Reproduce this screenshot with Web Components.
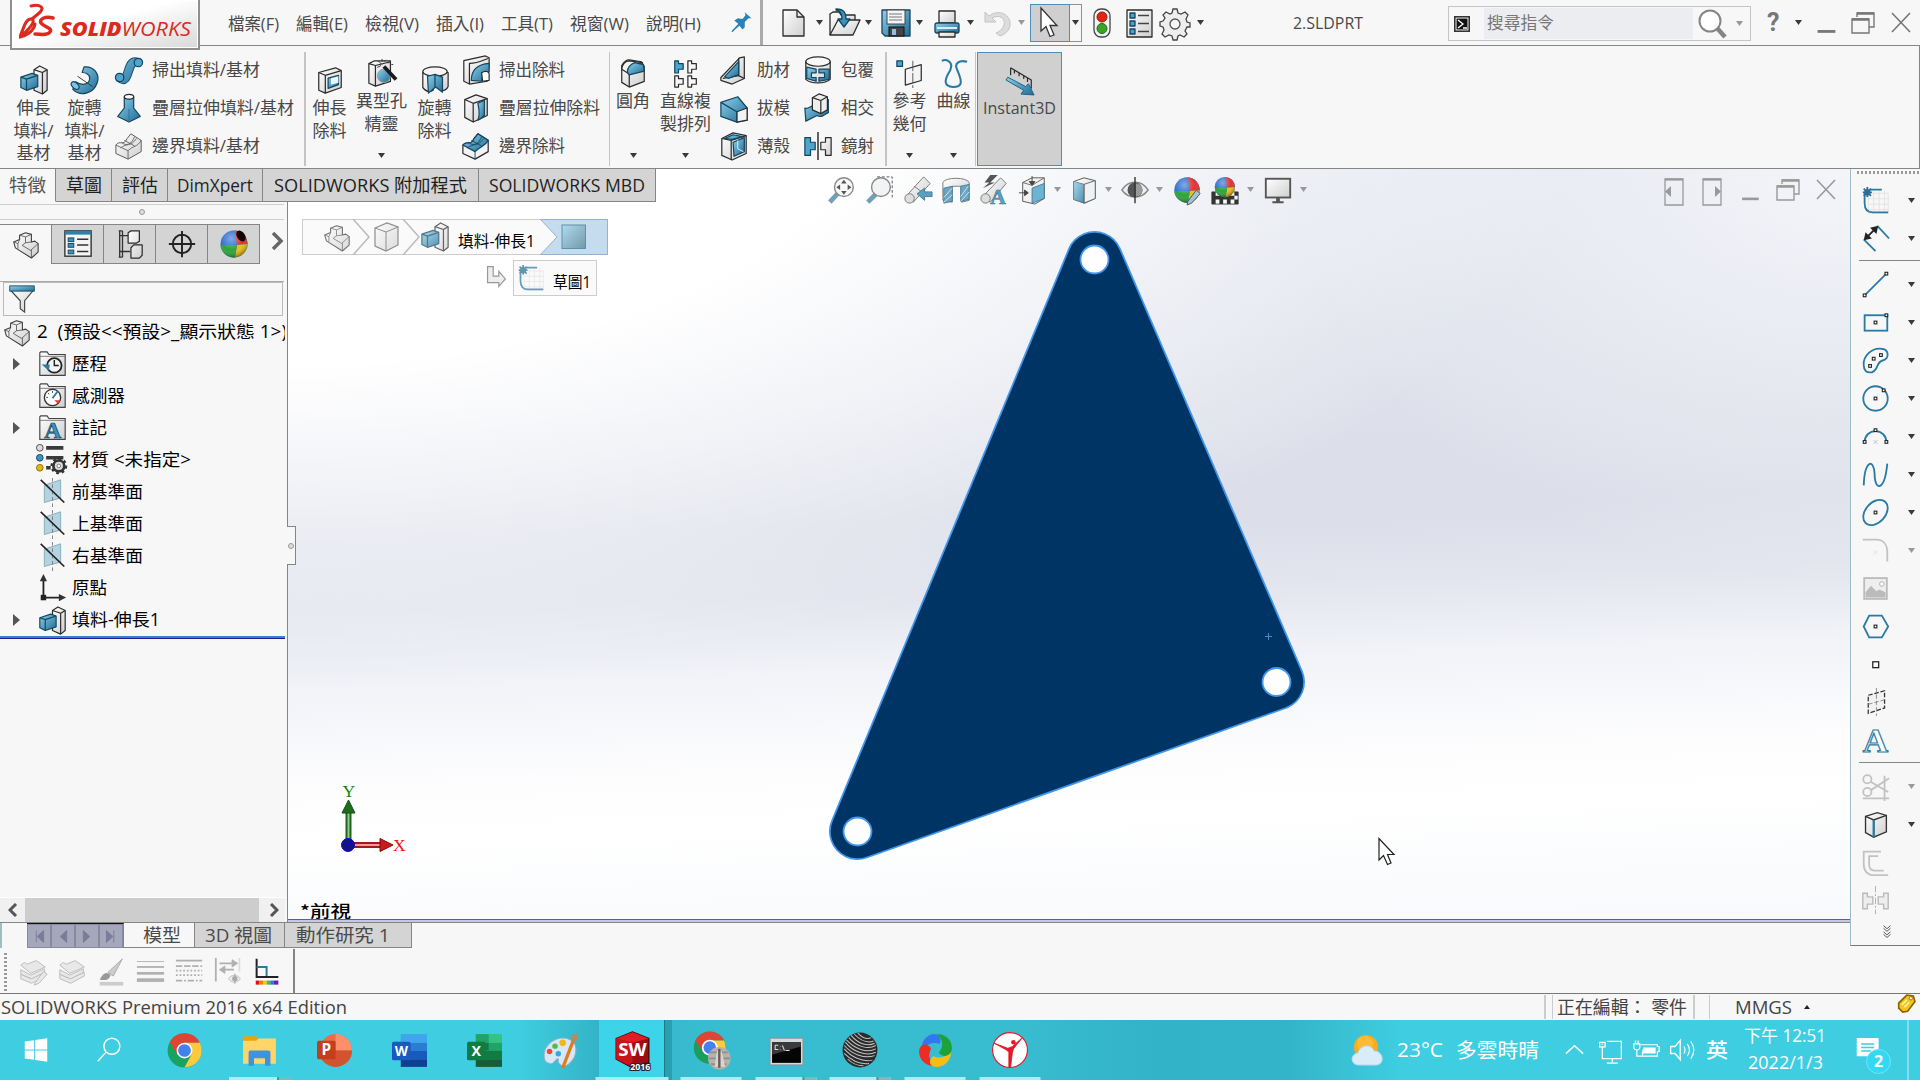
<!DOCTYPE html>
<html lang="zh-Hant">
<head>
<meta charset="utf-8">
<title>SOLIDWORKS</title>
<style>
html,body{margin:0;width:1920px;height:1080px;overflow:hidden;background:#f7f7f7}
body{font-family:"Open Sans","Noto Sans CJK TC",sans-serif;color:#444}
</style>
</head>
<body>
<sw-app></sw-app>
<script>
const K = 'stroke="#2b2b2b" stroke-width="1.3" stroke-linejoin="round"';
const B = 'stroke="#14465f" stroke-width="1.3" stroke-linejoin="round"';
const L = 'fill="none" stroke="#2a7aa4" stroke-width="2"';
const Y = 'fill="none" stroke="#c2c2c2" stroke-width="2"';
const pt = (x, y, c = '#222') => `<rect x="${x - 1.5}" y="${y - 1.5}" width="3" height="3" fill="#fff" stroke="${c}" stroke-width="1.2"/>`;
const folder = '<path d="M2 6v-3l1-1h7l2 3h18v23h-28z" fill="url(#g)" stroke="#444" stroke-width="1.3"/><path d="M2 7h28" stroke="#777"/>';
const plane = '<path d="M7 8 25 2v20L7 27z" fill="#b3d3e2" stroke="#86a9ba"/><path d="M16 0v32" stroke="#777" stroke-dasharray="4 3"/><path d="M3 2 29 27" stroke="#222" stroke-width="1.8"/>';
const asm = '<path d="M2 13l7-3V5l7-3 7 2v9l4-1 4 3v10l-8 7L4 20z" fill="url(#g)" stroke="#3f3f3f" stroke-width="1.3" stroke-linejoin="round"/><path d="M2 13l5 2 2-5M9 5l7 2 7-3M16 7v7l7-1M7 15v6M16 14l-4 3 10 6 9-8M23 22v9" fill="none" stroke="#555"/>';
const ball = '<circle cx="16" cy="16" r="13.500" fill="#2f6fd0"/><path d="M19 17 17 2.500A13.500 13.500 0 0 1 29.500 16z" fill="#d33"/><path d="M19 17 29.500 16A13.500 13.500 0 0 1 17 29.500z" fill="#e8bd1a"/><path d="M19 17 17 29.500A13.500 13.500 0 0 1 2.500 17z" fill="#2da33a"/><circle cx="16" cy="16" r="13.500" fill="url(#s)"/>';
const doc = 'fill="url(#g)" stroke="#2b2b2b" stroke-width="1.3" stroke-linejoin="round"';
const ICONS = {
 pin:'<path d="M4 29l9-10-6-5 5-3 6 1 4-5-1-4 9 8-4 0-5 5v7l-3 3-4-5z" fill="#2a83b8"/><path d="M4 29l11-12" stroke="#2a83b8" stroke-width="2"/>',
 new:`<path d="M6 3H20L27 10V29H6z" ${doc}/><path d="M20 3V10H27" fill="none" ${K}/>`,
 open:`<path d="M1 28V7l3-2h6l2 3h14v5" fill="url(#g)" ${K}/><path d="M1 28 9 13H31L24 28z" fill="url(#g)" ${K}/><path d="M7 2c9 0 10 5 10 10h4l-6 8-6-8h4c0-4-1-8-6-9z" fill="#3d93bd" ${B}/>`,
 save:`<path d="M2 3H30V29H5L2 26z" fill="url(#b)" ${B}/><rect x="7" y="3" width="18" height="14" fill="#f5f5f5" stroke="#444"/><path d="M9 7H22M9 10H22M9 13H22" stroke="#777"/><rect x="9" y="20" width="15" height="9" fill="#444" stroke="#111"/><rect x="12" y="22" width="4" height="6" fill="#9bd"/>`,
 print:`<path d="M8 4H24V16H8z" ${doc}/><rect x="4" y="16" width="24" height="10" rx="2" fill="url(#b)" ${B}/><path d="M6 21H26" stroke="#d8eefa" stroke-width="2"/><path d="M8 25H24V30H8z" ${doc}/>`,
 undo:'<path d="M3 5V15H14L10 11C17 7 24 11 22 18 21 22 17 25 14 26L18 29C24 27 29 22 28 15 26 5 14 3 7 9z" fill="#ddd" stroke="#c3c3c3"/>',
 cursor:'<path d="M8 1V24L13 19.500 17 29.500 21 28 17 18.500H24z" fill="#fff" stroke="#333" stroke-width="1.300"/>',
 light:'<rect x="8" y="2" width="16" height="28" rx="7" fill="#f3f3f3" stroke="#444" stroke-width="1.300"/><circle cx="16" cy="10" r="5" fill="#e42410" stroke="#821"/><circle cx="16" cy="21.500" r="5" fill="#3aa51f" stroke="#263"/>',
 list:`<rect x="4" y="3" width="25" height="27" ${doc}/><g fill="#4aa0cc" ${B}><rect x="7" y="6" width="5" height="5"/><rect x="7" y="14" width="5" height="5"/><rect x="7" y="22" width="5" height="5"/></g><path d="M15 8.500H26M15 16.500H26M15 24.500H26" stroke="#444" stroke-width="1.500"/>`,
 gear:'<path d="M14 2h4l1 4 3 1 4-2 3 3-2 4 1 3 3 1v4l-3 0-2 4 2 3-3 3-4-2-2 1-1 4h-4l-1-4-3-1-4 2-3-3 2-4-1-3-3-1v-4l3-1 2-3-2-3 3-3 4 2 2-1z" fill="#eee" stroke="#444" stroke-width="1.300"/><circle cx="16" cy="17" r="5" fill="#f7f7f7" stroke="#555" stroke-width="1.300"/>',
 boss:`<path d="M16 5 22 1 30 5V27L25 31 16 27z" fill="url(#g)" ${K}/><path d="M16 5 25 8 30 5M25 8V31" fill="none" ${K}/><path d="M2 13 14 9 20 11V23L8 27 2 24z" fill="url(#b)" ${B}/><path d="M2 13 8 15 20 11M8 15V27" fill="none" ${B}/>`,
 revolve:`<path d="M15 2C26 1 32 10 29 19 25 31 11 34 3 26L6 18C14 23 21 20 21 14 21 10 17 8 13 8z" fill="url(#b)" ${B}/><ellipse cx="5.500" cy="22" rx="3" ry="5" transform="rotate(-45 5.500 22)" fill="#7dc4e6" ${B}/><path d="M8 12 24 23" stroke="#333"/>`,
 sweep:`<path d="M6 24C17 34 13 3 25 8" fill="none" stroke="#174d68" stroke-width="10"/><path d="M6 24C17 34 13 3 25 8" fill="none" stroke="url(#b2)" stroke-width="8"/><circle cx="26" cy="8" r="4.500" fill="#4ea5cd" ${B}/><circle cx="6" cy="24" r="4.500" fill="#4ea5cd" ${B}/>`,
 loft:`<path d="M11 4V16L4 25 16 31 28 25 21 16V4z" fill="url(#b)" ${B}/><path d="M16 31V17" stroke="#2b7496"/><ellipse cx="16" cy="4" rx="5" ry="2.500" fill="#fff" ${K}/>`,
 boundary:`<path d="M2 15C6 9 10 17 14 8L18 3 29 10V22L15 30 2 24z" fill="url(#g)" stroke="#555"/><path d="M2 15 15 21V30M15 21C21 15 24 18 29 10M8 12C13 17 19 14 22 6M7 18C13 13 18 17 24 8M11 10l11 6" fill="none" stroke="#666"/>`,
 cut:`<path d="M4 8 22 3 28 6V24L11 30 4 27z" fill="url(#g)" ${K}/><path d="M4 8 11 11 28 6M11 11V30" fill="none" ${K}/><path d="M14 14 25 11V21L14 25z" fill="url(#b)" ${B}/><path d="M17 14V21L25 19 25 12z" fill="#e8f5fb"/>`,
 hole:`<path d="M2 6 8 3H25V25L9 30 2 27z" fill="url(#g)" ${K}/><path d="M9 8V30M2 6 9 8 25 4" fill="none" ${K}/><circle cx="18" cy="19" r="7" fill="url(#b)" stroke="#999"/><path d="M18 9 31 23" stroke="#1b1b1b" stroke-width="4"/><path d="M12 3 16 7M16 1V4M20 2 18 4M24 5H21M28 7H26M11 10 15 8" stroke="#333"/>`,
 revcut:`<path d="M3 8V24C7 29 11 29 14 27L16 11 22 27C25 28 29 26 30 23V8z" fill="url(#g)" ${K}/><ellipse cx="16" cy="7" rx="13" ry="5" fill="#f5f5f5" ${K}/><path d="M8 12 16 10V24L9 30zM16 10 24 13V29L16 23z" fill="url(#b)" ${B}/>`,
 sweepcut:`<path d="M3 6 26 1 30 3V12L28 28 9 31 3 28z" fill="url(#g)" ${K}/><path d="M9 31V9C19 9 29 3 29 4" fill="none" ${K}/><path d="M11 27C11 15 18 10 30 9V18C24 19 22 23 22 28z" fill="url(#b)" ${B}/><path d="M22 19C26 16 30 18 30 20V27L23 28z" fill="#fff" ${K}/>`,
 loftcut:`<path d="M4 7 16 2 28 6V24L13 31 4 26z" fill="url(#g)" ${K}/><path d="M4 7 13 11 28 6M13 11V31" fill="none" ${K}/><path d="M18 11 25 8V24C23 26 20 28 18 29 21 22 19 17 18 11z" fill="url(#b)" ${B}/>`,
 boundcut:`<path d="M2 15C6 9 10 17 14 8L18 3 29 10V22L15 30 2 24z" fill="#f3f3f3" ${K}/><path d="M2 15C6 9 10 17 14 8L18 3 29 10C25 17 22 15 15 22z" fill="url(#b)" ${B}/><path d="M15 22V30M8 12C13 17 19 14 22 6M7 18C13 13 18 17 24 8M11 10l11 6" fill="none" stroke="#174d68"/>`,
 fillet:`<path d="M4 11 4 8C7 3 9 2 12 2L25 4 28 9V25L12 31 4 26z" fill="url(#g)" ${K}/><path d="M12 17V31" fill="none" ${K}/><path d="M4 12C4 7 8 3 12 3L26 5C18 7 13 10 12 17z" fill="#f4f4f4" ${K}/><path d="M10 15C10 11 13 7 18 5L27 7 28 14 12 18z" fill="url(#b)" ${B}/>`,
 pattern:`<g fill="none" ${K}><path d="M18 3H22V6H27V12H22V16H18zM4 19H8V22H13V28H8V31H4zM18 19H22V22H27V28H22V31H18z"/></g><path d="M4 3H8V6H13V12H8V16H4z" fill="#4ea5cd" ${B}/>`,
 rib:`<path d="M2 24 22 3 27 2V25L14 31 2 27z" fill="url(#g)" ${K}/><path d="M21 3V22L4 25M21 22 27 25" fill="none" ${K}/><path d="M21 7V21L10 25 6 23z" fill="url(#b)" ${B}/>`,
 draft:`<path d="M2 10 20 4 30 16V29L19 31 2 25z" fill="url(#b)" ${B}/><path d="M19 20 30 16V29L19 31z" fill="#f2f2f2" ${K}/><path d="M2 10 19 20V31" fill="none" ${B}/>`,
 shell:`<path d="M3 8 15 2 29 5V24L14 31 3 26z" fill="url(#g)" ${K}/><path d="M3 8 13 10V31M13 10 29 5" fill="none" ${K}/><path d="M15 12 27 7V22L16 27z" fill="url(#b)" ${B}/><path d="M6 8 15 4 25 6 14 9z" fill="#5aaed4" ${B}/><path d="M20 10V19L26 22" fill="none" stroke="#e8f5fb"/>`,
 wrap:`<path d="M3 7V26C8 31 24 31 29 26V7z" fill="url(#g)" ${K}/><ellipse cx="16" cy="7" rx="13" ry="5" fill="#f8f8f8" ${K}/><path d="M4 13 14 15V19H9V24H14V28L4 25zM17 15H28V26L17 28V24H23V19H17z" fill="url(#b)" ${B}/>`,
 intersect:`<path d="M2 16C6 18 9 12 13 14L27 7V21C22 23 20 27 15 24L3 30z" fill="url(#b)" ${B}/><path d="M10 5 17 1 26 4V18L19 22 10 18z" fill="#eee" ${K}/><path d="M10 5 19 8 26 4M19 8V22" fill="none" ${K}/>`,
 mirror:`<path d="M2 7H8V12H13V20H8V26H2z" fill="#4ea5cd" ${B}/><path d="M30 7H24V12H19V20H24V26H30z" fill="url(#g)" ${K}/><path d="M16 1V31" stroke="#222" stroke-width="1.500"/>`,
 refgeo:`<rect x="2" y="3" width="6" height="6" fill="#4ea5cd" ${B}/><path d="M11 12 28 7V24L11 29z" fill="#f4f4f4" ${K}/><path d="M19 3V32" stroke="#555" stroke-dasharray="11 2"/>`,
 curve:'<path d="M3 3C7 1 16 3 12 13 5 24 5 30 15 31 25 31 25 26 20 14 15 5 22 2 30 4" fill="none" stroke="#2a7aa4" stroke-width="2.200"/>',
 instant:`<path d="M6 3 28 16V25M6 3V11M10 5V9M15 8V12M20 11V15M24 14V18" fill="none" ${K}/><path d="M1 16 20 27 17 31 31 32 25 20 22 23 3 13z" fill="url(#b)" stroke="#1b5e80"/>`,
 zoomfit:'<path d="M3 29 12 19" stroke="#6fa0b8" stroke-width="5"/><circle cx="18" cy="13" r="10" fill="#f8f8f8" stroke="#888" stroke-width="1.500"/><path d="M18 5l3 4h-6zM18 21l3-4h-6zM10 13l4-3v6zM26 13l-4-3v6z" fill="#555"/>',
 zoomarea:'<path d="M13 2H29V25" fill="none" stroke="#555" stroke-dasharray="3 2"/><path d="M3 29 12 20" stroke="#6fa0b8" stroke-width="5"/><circle cx="17" cy="13" r="10" fill="#f1f3f5" stroke="#888" stroke-width="1.500"/>',
 zoomprev:'<path d="M3 23 22 2 29 9 11 29z" fill="url(#g)" stroke="#777"/><circle cx="7" cy="25" r="5" fill="#ddd" stroke="#777"/><path d="M12 12 20 18" stroke="#777"/><path d="M31 18H23V14L15 20 23 27V23H31z" fill="#5d9fbe" stroke="#447f9b"/>',
 section:'<path d="M2 8C4 2 28 2 30 8V27L22 29V12H12V29L2 27z" fill="url(#g)" stroke="#777"/><path d="M3 14 12 12V28L3 30zM21 12 30 10V26L21 28z" fill="#6ba6c2" stroke="#4b7e96"/><path d="M3 24 12 14M3 29 12 21M21 23 29 12M21 28 30 18" stroke="#d3e7ef"/>',
 dynview:'<path d="M12 0 6 8H11L4 14 17 8H12L20 0z" fill="#555"/><path d="M3 24 23 3 29 9 12 29z" fill="url(#g)" stroke="#777"/><circle cx="7" cy="25" r="5" fill="#ddd" stroke="#777"/><text x="12" y="31" font-family="Liberation Serif" font-weight="bold" font-size="23" fill="#5d9fbe" stroke="#3f7892" stroke-width=".6">A</text>',
 orient:'<path d="M5 8 15 3H28V25L18 31 5 28z" fill="#f2f2f2" stroke="#555"/><path d="M5 8 15 11 28 3" fill="none" stroke="#666"/><path d="M15 14 28 9V25L15 30z" fill="#6db3d2" stroke="#467d97"/><path d="M15 1V9M15 11l-3-4h6zM1 19H9M11 19l-4-3v6z" stroke="#444" fill="#444"/>',
 display:'<path d="M5 7 16 3 28 6V25L17 30 5 26z" fill="url(#g)" stroke="#555"/><path d="M5 7 16 10V30L5 26zM16 10 28 6V25L16 30z" fill="#eef2f4" stroke="#666"/><path d="M5 7 16 10V30L5 26z" fill="url(#b)" opacity=".75"/>',
 eye:'<path d="M2 16C9 5 23 5 30 16 23 26 9 26 2 16z" fill="#eee" stroke="#888" stroke-width="1.500"/><circle cx="16" cy="16" r="8" fill="#555"/><path d="M16 2V30" stroke="#333" stroke-width="1.500"/><path d="M17 9a7 7 0 0 1 0 14z" fill="#999"/>',
 appear:`${ball}<path d="M17 28 26 16 30 20 21 30 16 32z" fill="#9cc5d8" stroke="#555"/>`,
 scene:'<path d="M2 18H30V31H2z" fill="#f8f8f8" stroke="#444"/><path d="M2 18h4v4h4v-4h4v4h4v-4h4v4h4v-4h4v4h-4v4h4v5h-4v-5h-4v5h-4v-5h-4v5h-4v-5h-4v5h-4v-9z" fill="#333"/><g transform="translate(3 0) scale(.8)">'+ball+'</g>',
 monitor:'<rect x="3" y="4" width="26" height="20" fill="url(#g)" stroke="#555" stroke-width="2"/><path d="M14 24h4v4h4v2h-12v-2h4z" fill="#555"/>',
 asm, ball:ball+'<ellipse cx="23" cy="8" rx="4" ry="6" transform="rotate(-35 23 8)" fill="#150000"/>',
 prop:'<rect x="2" y="2" width="28" height="27" fill="#f4f4f4" stroke="#333" stroke-width="1.500"/><rect x="2" y="2" width="28" height="4" fill="#2d82ad"/><g fill="#3d93bd" stroke="#14465f"><rect x="5.500" y="9.500" width="6" height="4"/><rect x="5.500" y="15.500" width="6" height="4"/><rect x="5.500" y="22.500" width="6" height="4"/></g><path d="M15 11H27M15 17H27M15 24H27" stroke="#333" stroke-width="1.500"/>',
 config:`<path d="M5 2V30M5 7H14M5 24H16M4 2h4M4 30h4M8 2v28" fill="none" stroke="#333" stroke-width="1.400"/><path d="M14 4 17 2H26V13L23 15H14zM17 20 20 17H29V28L26 31H17z" fill="url(#g)" ${K}/>`,
 target:'<circle cx="16" cy="16" r="10.500" fill="none" stroke="#222" stroke-width="2.200"/><path d="M16 1V31M1 16H31" stroke="#222" stroke-width="2.200"/>',
 filter:'<path d="M3 6 14 18V27L19 31V18L29 6z" fill="url(#g)" stroke="#444" stroke-width="1.300"/><rect x="2" y="1" width="28" height="6" fill="url(#b)" stroke="#14465f"/>',
 history:folder+'<circle cx="18" cy="17" r="8" fill="#f5f5f5" stroke="#222" stroke-width="2"/><path d="M18 11V17H23" fill="none" stroke="#222" stroke-width="1.600"/><path d="M4 16H13L12 23z" fill="#2a7aa4"/>',
 sensor:folder+'<circle cx="16" cy="17" r="9" fill="#fff" stroke="#333" stroke-width="1.500"/><path d="M16 10v2M9 17h2M11 12l1.500 1.500" stroke="#333"/><path d="M16 18 22 10" stroke="#2a7aa4" stroke-width="2"/><path d="M18 20H25L22 24z" fill="#e33"/>',
 note:folder+'<text x="7" y="26.500" font-family="Liberation Serif" font-weight="bold" font-size="26" fill="#3d93bd" stroke="#14465f" stroke-width=".8">A</text>',
 material:'<circle cx="2" cy="2" r="3.700" fill="#ddd" stroke="#444"/><circle cx="2" cy="13" r="3.700" fill="#3d93bd" stroke="#14465f"/><circle cx="2" cy="24" r="3.700" fill="#e5b711" stroke="#8a6d00"/><path d="M9 2H28M9 13H28M9 24H14" stroke="#3a3a3a" stroke-width="4"/><circle cx="23" cy="22" r="6" fill="#ddd" stroke="#333" stroke-width="3"/><circle cx="23" cy="22" r="8" fill="none" stroke="#333" stroke-width="2.500" stroke-dasharray="3 3.200"/><circle cx="23" cy="22" r="2" fill="#fff" stroke="#777"/>',
 plane,
 origin:'<path d="M6 27V6M6 26H26" stroke="#222" stroke-width="2"/><path d="M6 0 10 8H2zM31 26 23 22V30z" fill="#333"/><rect x="3" y="23" width="6" height="6" fill="#222"/>',
 cube:'<path d="M5 7 17 2 28 6V24L16 30 5 25z" fill="url(#g)" stroke="#666" stroke-width="1.200"/><path d="M5 7 16 11 28 6M16 11V30" fill="none" stroke="#666"/>',
 sketch:`<path d="M8 8h22v22h-22zM14 5v25M20 5v25M26 5v25M8 14h23M8 20h23M8 26h23" fill="none" stroke="#e2e2e2"/><path d="M4 8V19C4 25 7 29 13 29H30M10 4H23" ${L}/><path d="M7 1V12M2 7H12M3 3 11 11M11 3 3 11" stroke="#2a6d93" stroke-width="2"/><circle cx="7" cy="7" r="3.500" fill="#2a6d93"/>`,
 dim:'<path d="M18 2 31 16M3 17 16 30" '+L+'/><path d="M6 15 16 5" stroke="#222" stroke-width="2"/><path d="M3 18 5 9 12 16zM19 2 10 4 17 11z" fill="#222"/>',
 line:`<path d="M4 28 28 4" ${L}/>${pt(4,28)}${pt(28,4)}`,
 rect:`<rect x="4" y="8" width="25" height="17" ${L}/>${pt(16,16)}${pt(28,8)}`,
 slot:`<path d="M3 21C2 11 12 2 22 3 31 3 32 14 24 16 16 18 20 26 12 29 6 30 3 27 3 21z" ${L}/>${pt(10,22)}${pt(14,14)}${pt(22,10)}`,
 circle:`<circle cx="16" cy="16" r="13.500" ${L}/>${pt(16,16)}${pt(25,7)}`,
 arc:`<path d="M4 22A12 12 0 0 1 28 22" ${L}/>${pt(4,22)}${pt(28,22)}${pt(16,9)}<path d="M14 20l4 4M18 20l-4 4" stroke="#bbb"/>`,
 spline:`<path d="M3 28C4 0 14 -2 15 15 15 35 26 35 29 4" ${L}/>`,
 ellipse:`<ellipse cx="16" cy="16" rx="16" ry="11" transform="rotate(-48 16 16)" ${L}/>${pt(16,16)}`,
 sfillet:`<path d="M2 4H17C25 4 29 10 29 18V28" ${Y}/><path d="M14 16l4 4M18 16l-4 4" stroke="#ddd"/>`,
 picture:'<rect x="3.500" y="4.500" width="25" height="23" fill="#eee" stroke="#bbb" stroke-width="2"/><path d="M5 20 11 13 17 19 20 17 27 20V26H5z" fill="#bbb"/><circle cx="23" cy="11" r="2.500" fill="#fff" stroke="#aaa"/>',
 hex:`<path d="M3 16 9 4H23L30 16 23 28H9z" ${L}/>${pt(16,16)}`,
 point:'<rect x="13" y="13" width="6.500" height="6.500" fill="#fff" stroke="#222" stroke-width="1.400"/>',
 splane:'<path d="M8 8 26 3V22L8 28z" fill="#f2f2f2" stroke="#333" stroke-dasharray="5 2" stroke-width="1.400"/><path d="M17 0V31M8 18 26 13" stroke="#888" stroke-dasharray="5 2"/>',
 text:'<text x="2" y="29" font-family="Liberation Serif" font-weight="bold" font-size="38" textLength="28" lengthAdjust="spacingAndGlyphs" fill="#fff" stroke="#2a7aa4" stroke-width="1.300">A</text>',
 trim:`<path d="M2 29H31M26 4V32M11 11 30 22M11 20 31 7" ${Y}/><circle cx="7" cy="8" r="4.500" ${Y}/><circle cx="7" cy="22" r="4.500" ${Y}/>`,
 convert:'<path d="M5 7 18 3 28 6V24L14 30 5 25z" fill="url(#g)" stroke="#333" stroke-width="1.500"/><path d="M5 7 14 11 28 6M14 11V30" fill="none" stroke="#333" stroke-width="1.500"/><path d="M14 11V30" stroke="#2a7aa4" stroke-width="2.500"/>',
 offset:`<path d="M22 4H3V18C3 25 7 30 14 30H30M19 9H9V18C9 22 11 25 15 25H25" ${Y}/>`,
 smirror:'<path d="M2 8H7V12H13V20H7V25H2zM30 8H25V12H19V20H25V25H30z" fill="#eee" stroke="#bbb" stroke-width="1.600"/><path d="M16 0V31" stroke="#aaa" stroke-dasharray="7 2 2 2"/>',
 layer:'<g fill="#e8e8e8" stroke="#bdbdbd" stroke-width="1.100"><path d="M2 19 13 24 29 17V21L14 29 2 24z"/><path d="M2 14 13 20 28 13V17L14 24 2 19z"/><path d="M2 9 6 6 9 8 19 4 29 11 13 18z"/></g>',
 layeredit:'<g fill="#e8e8e8" stroke="#bdbdbd" stroke-width="1.100"><path d="M2 19 13 24 29 17V21L14 29 2 24z"/><path d="M2 14 13 20 28 13V17L14 24 2 19z"/><path d="M2 9 6 6 9 8 19 4 29 11 13 18z"/><path d="M18 28 27 16 31 19 22 29 17 31z"/></g>',
 brush:'<path d="M12 17 28 2 18 21z" fill="#ccc" stroke="#aaa"/><path d="M3 25C7 17 11 16 15 20 13 26 8 26 3 25z" fill="#999"/><path d="M3 29.500H29" stroke="#ccc" stroke-width="4"/>',
 widths:'<path d="M1 5H31" stroke="#b0b0b0"/><path d="M1 11H31" stroke="#b0b0b0" stroke-width="2"/><path d="M1 18H31" stroke="#b0b0b0" stroke-width="3"/><path d="M1 25.500H31" stroke="#b0b0b0" stroke-width="4"/>',
 styles:'<g stroke="#b0b0b0" stroke-width="2"><path d="M1 4H30"/><path d="M1 10H30" stroke-dasharray="7 2"/><path d="M1 15H30M1 20H30" stroke-dasharray="2 2"/><path d="M1 26H30" stroke-dasharray="7 2 2 2"/></g>',
 swap:'<g stroke="#b0b0b0" fill="#b0b0b0"><path d="M2 1V27" stroke-width="2"/><path d="M6 7H20M8 14H22" stroke-width="2"/><path d="M26 7 20 3V11zM6 14 12 10V18z"/></g><path d="M28 1V16" stroke="#ddd" stroke-width="2"/><path d="M16 24C19 19 26 19 29 24 26 29 19 29 16 24z" fill="#eee" stroke="#bbb"/><circle cx="23" cy="24" r="3" fill="#aaa"/><path d="M23 18v12" stroke="#aaa"/>',
 color:'<path d="M4 2V22H28" fill="none" stroke="#222" stroke-width="2.200"/><path d="M4 11H15V21" fill="none" stroke="#2a7aa4" stroke-width="2.200"/><g><path d="M3 26h4v4.500h-4z" fill="#e01010"/><path d="M7 26h4v4.500h-4z" fill="#f47a10"/><path d="M11 26h4v4.500h-4z" fill="#f6c514"/><path d="M15 26h4v4.500h-4z" fill="#5cb335"/><path d="M19 26h4v4.500h-4z" fill="#1487c0"/><path d="M23 26h5v4.500h-5z" fill="#6a1bd0"/></g>',
 restore:'<path d="M10 10V6H27V20H22M5 12H22V26H5z" fill="none" stroke="currentColor" stroke-width="1.400"/><path d="M5 12.500H22M10 6.500H27" stroke="currentColor" stroke-width="2.400"/>',
 close:'<path d="M7 6 25 25M25 6 7 25" stroke="currentColor" stroke-width="1.600"/>',
 min:'<path d="M7 25H26" stroke="currentColor" stroke-width="3"/>',
 paneL:'<path d="M7 5V31H25V5z" fill="none" stroke="currentColor" stroke-width="1.300"/><path d="M7 5.500H25" stroke="currentColor" stroke-width="2.200"/><path d="M13 12 7 17.500 13 23z" fill="currentColor"/>',
 paneR:'<path d="M7 5V31H25V5z" fill="none" stroke="currentColor" stroke-width="1.300"/><path d="M7 5.500H25" stroke="currentColor" stroke-width="2.200"/><path d="M19 12 25 17.500 19 23z" fill="currentColor"/>',
 mag:'<circle cx="13" cy="13" r="10.500" fill="#fff" stroke="#858585" stroke-width="2"/><path d="M20 20 28 29" stroke="#858585" stroke-width="4.500"/>',
 cmd:'<rect x="8.500" y="8.500" width="15" height="15" fill="#111" stroke="#333"/><rect x="10" y="10" width="12" height="12" fill="none" stroke="#fff"/><path d="M12 12 17 16 12 20M17 20H21" fill="none" stroke="#fff" stroke-width="1.300"/>',
 more:'<path d="M12 11 16 14.500 20 11M12 14 16 17.500 20 14M12 18 16 21.500 20 18M12 21 16 24.500 20 21" fill="none" stroke="#444" stroke-width="1"/>',
 into:'<path d="M7 5H13V15H19V10L26 18 19 26V22H7z" fill="#eee" stroke="#999" stroke-width="1.300"/>',
 tag:'<path d="M7 15 17 5 25 6 27 13 18 25 12 26 7 21z" fill="#f4c61c" stroke="#8e6100" stroke-width="2"/><path d="M11 17 17 11M14 20 20 14" stroke="#fff2a0" stroke-width="2"/><circle cx="22" cy="9" r="2" fill="#fff" stroke="#8e6100"/>',
 win:'<path d="M4 7 14 5.500V15.500H4zM15 5.300 28 3.500V15.500H15zM4 16.500H14V26.500L4 25zM15 16.500H28V28.500L15 26.700z" fill="#fff"/>',
 tsearch:'<circle cx="18" cy="12" r="8.500" fill="none" stroke="#fff" stroke-width="1.500"/><path d="M12 18 3 28" stroke="#fff" stroke-width="1.500"/>',
 chrome:'<circle cx="16" cy="16" r="15.500" fill="#1aa260"/><path d="M2.500 8.300A15.500 15.500 0 0 1 30 9H16L9.500 19.500z" fill="#e04435"/><path d="M30 9A15.500 15.500 0 0 1 16 31.500L22.500 19.500 16 9z" fill="#fdc93f"/><circle cx="16" cy="16" r="7.200" fill="#fff"/><circle cx="16" cy="16" r="5.800" fill="#4480ee"/>',
 chromeu:'<circle cx="15" cy="14" r="13.500" fill="#1a9d5d"/><path d="M3 8A13.500 13.500 0 0 1 27 8H15L9 17z" fill="#e04435"/><path d="M27 8A13.500 13.500 0 0 1 15 27.500L22 17 15 8z" fill="#fdc93f"/><circle cx="15" cy="14" r="6.700" fill="#fff"/><circle cx="15" cy="14" r="5.300" fill="#4480ee"/><circle cx="23" cy="23" r="9.500" fill="#b9b2a6"/><path d="M15 18h15M14 23h18M16 28h13" stroke="#89909a" stroke-width="1.500"/><path d="M21 17l4 0 3 13h-9z" fill="#ded3c8"/><path d="M23 15v16" stroke="#655a5c" stroke-width="2"/>',
 explorer:'<path d="M1 3H13L15 6H31V27H1z" fill="#e8a50a"/><path d="M1 7H13L15 5H31V28H1z" fill="#ffd568"/><path d="M6 30V18C6 16 7 16 8 16H24C26 16 26 17 26 18V30H21V23H11V30z" fill="#3f93de"/>',
 ppt:'<circle cx="17" cy="16" r="15" fill="#ed6c47"/><path d="M17 1A15 15 0 0 1 32 16H17z" fill="#ff8f6b"/><path d="M2 16H32A15 15 0 0 1 2 16z" fill="#d35230"/><rect x="0" y="7" width="17" height="17" rx="1.500" fill="#c43e1c"/><text x="4" y="20.500" font-family="Open Sans" font-weight="bold" font-size="14" fill="#fff">P</text>',
 word:'<path d="M8 1H32V9H8z" fill="#41a5ee"/><path d="M8 9H32V16H8z" fill="#2b7cd3"/><path d="M8 16H32V24H8z" fill="#185abd"/><path d="M8 24H32V31H8z" fill="#103f91"/><rect x="0" y="8" width="17" height="17" rx="1.500" fill="#185abd"/><text x="2.500" y="21" font-family="Open Sans" font-weight="bold" font-size="12.500" fill="#fff">W</text>',
 excel:'<path d="M8 1H20V9H8z" fill="#21a366"/><path d="M20 1H32V9H20z" fill="#33c481"/><path d="M8 9H20V16H8z" fill="#107c41"/><path d="M20 9H32V16H20z" fill="#21a366"/><path d="M8 16H32V24H8z" fill="#107c41"/><path d="M8 24H32V31H8z" fill="#185c37"/><rect x="0" y="8" width="17" height="17" rx="1.500" fill="#107c41"/><text x="4" y="21" font-family="Open Sans" font-weight="bold" font-size="13" fill="#fff">X</text>',
 paint:'<path d="M1 22C0 10 12 3 22 5 33 8 32 21 24 28 18 33 13 28 14 24 12 22 11 29 6 28 2 27 1 25 1 22z" fill="#d6e8f6" stroke="#8bafc6"/><circle cx="6" cy="17" r="2.500" fill="#e64b3c"/><circle cx="11" cy="12" r="2.500" fill="#55b948"/><circle cx="18" cy="9" r="3" fill="#f5b51d"/><circle cx="14" cy="19" r="2.500" fill="#37a9d9"/><path d="M18 32 28 6" stroke="#e07b1e" stroke-width="3"/><path d="M26 8 26 2 32 0 32 5 29 9z" fill="#b98b58"/>',
 sw:'<path d="M1 5 16 -1 31 5V27L16 32 1 24z" fill="#9e0d14" stroke="#300"/><path d="M1 5 16 -1 31 5 16 9z" fill="#e11c24"/><path d="M1 5 16 9V31L1 24z" fill="#c9141c"/><text x="3" y="21" font-family="Open Sans" font-weight="bold" font-size="17" textLength="26" lengthAdjust="spacingAndGlyphs" fill="#fff">SW</text><text x="14" y="33.500" font-family="Open Sans" font-weight="bold" font-size="8" fill="#fff" stroke="#222" stroke-width="2" paint-order="stroke">2016</text>',
 term:'<rect x="0" y="4" width="32" height="26" fill="#d5dadd" stroke="#8b9195"/><rect x="2" y="8" width="28" height="20" fill="#050505"/><path d="M2 8H30V12L2 20z" fill="#3a3a3a"/><path d="M5 11H8M5 11V15H8M10 12V12.500M10 15V15.500M12 11 14 16M15 16H19" fill="none" stroke="#ddd"/>',
 sphere:'<circle cx="16" cy="16" r="15.500" fill="#2b2b2b"/><g fill="none" stroke="#c4c4c4" stroke-width=".9"><path d="M2 12C9 20 20 24 29 21M2 15C8 22 18 27 27 25M2 19C8 25 16 29 24 28M3 9C9 17 21 22 30 18M4 7C11 15 22 19 30 15M6 5C13 13 23 16 30 12M8 3C15 11 23 13 29 10M11 2C17 8 23 10 28 8M14 1C18 5 22 7 26 5M5 24C9 28 14 30 19 30"/></g>',
 ring:'<path d="M14 1A12 12 0 0 0 4 16C8 10 14 8 20 10 22 5 19 1 14 1z" fill="#3377ee"/><path d="M1 17C1 26 9 31 16 30 10 26 9 20 12 14 8 8 1 10 1 17z" fill="#ee2b24"/><path d="M17 31C26 31 31 23 30 16 26 22 20 24 14 21 8 27 12 31 17 31z" fill="#f8bd12"/><path d="M31 14C31 5 24 1 17 1 23 6 24 12 19 18 24 24 31 20 31 14z" fill="#1ba33a"/>',
 dancer:'<circle cx="16" cy="16" r="15.500" fill="#fff" stroke="#e3182a" stroke-width="1"/><path d="M2 10 14 14.500 18 13 27 5 19 15 18 19 16.500 31H15L15 18 13 16z" fill="#e3182a" stroke="#e3182a" stroke-width=".8"/><circle cx="19" cy="9" r="2" fill="#e3182a"/>',
 weather:'<circle cx="15" cy="13" r="12" fill="#fbac1a"/><circle cx="14" cy="10" r="8" fill="#ffc34a" opacity=".6"/><path d="M8 31C-1 31-1 20 7 19 9 11 20 9 23 17 33 17 34 31 25 31z" fill="#d8ecfa" stroke="#b8d9ef"/>',
 up:'<path d="M5 20 16 10 27 20" fill="none" stroke="#fff" stroke-width="1.800"/>',
 net:'<path d="M4 12V7H10V12zM7 12V25H28V6H12M18 25V29M12 30H24" fill="none" stroke="#fff" stroke-width="1.400"/><path d="M6 9h2" stroke="#fff"/>',
 batt:'<path d="M10 10H29V12H31V18H29V23H12V19" fill="none" stroke="#fff" stroke-width="1.400"/><path d="M13 13H27V20H11z" fill="#fff"/><path d="M2 9H9V12C9 15 8 16 5.500 16 3 16 2 15 2 12zM4 5V9M7 5V9M5.500 16V23H12" fill="none" stroke="#fff" stroke-width="1.400"/>',
 vol:'<path d="M3 12H8L14 5V27L8 20H3z" fill="none" stroke="#fff" stroke-width="1.500"/><path d="M18 12Q21 16 18 20M22 9Q27 16 22 23M26 6Q33 16 26 26" fill="none" stroke="#fff" stroke-width="1.300"/>',
 notif:'<path d="M2 1H27V22H20L14 28V22H2z" fill="#fff"/><path d="M7 8H22M7 12H22M7 16H18" stroke="#3fcde1" stroke-width="1.500"/>'
};
const DEFS = `<defs><linearGradient id="b" x1="0" y1="0" x2="1" y2="1"><stop offset="0" stop-color="#8fd0ec"/><stop offset="1" stop-color="#1e6b94"/></linearGradient><linearGradient id="b2" gradientUnits="userSpaceOnUse" x1="0" y1="0" x2="32" y2="32"><stop offset="0" stop-color="#7cc2e2"/><stop offset="1" stop-color="#1e6b94"/></linearGradient><linearGradient id="b3" x1="0" y1="0" x2="1" y2="1"><stop offset="0" stop-color="#aeddf0"/><stop offset="1" stop-color="#7298a8"/></linearGradient><linearGradient id="g" x1="0" y1="0" x2="1" y2="1"><stop offset="0" stop-color="#fff"/><stop offset="1" stop-color="#cfcfcf"/></linearGradient><radialGradient id="s" cx=".4" cy=".3" r=".7"><stop offset="0" stop-color="#fff" stop-opacity=".4"/><stop offset=".6" stop-color="#fff" stop-opacity="0"/><stop offset="1" stop-color="#000" stop-opacity=".35"/></radialGradient></defs>`;

const pending = [];
function element(name, css, html, after) {
  pending.push([name, class extends HTMLElement {
    connectedCallback() {
      if (this.shadowRoot) return;
      const root = this.attachShadow({ mode: 'open' });
      const t = document.createElement('template');
      t.innerHTML = `<style>*{box-sizing:border-box}${css}</style>` + (typeof html === 'function' ? html(n => this.getAttribute(n), this) : html);
      root.appendChild(t.content.cloneNode(true));
      if (after) after(this, root);
    }
  }]);
}

/* shell */
element('sw-app', `:host{display:flex;flex-direction:column;width:1920px;height:1080px;overflow:hidden}
 .work{display:flex;height:779px;flex:none}.col{display:flex;flex-direction:column;width:1850px}`,
 `<sw-titlebar></sw-titlebar><sw-ribbon></sw-ribbon>
 <div class="work"><div class="col"><sw-main></sw-main><sw-modeltabs></sw-modeltabs></div><sw-sketchbar></sw-sketchbar></div>
 <sw-layerbar></sw-layerbar><sw-status></sw-status><sw-taskbar></sw-taskbar>`);

/* title bar */
element('sw-titlebar', `:host{display:flex;height:46px;flex:none;border-bottom:1.500px solid #858585;align-items:stretch;position:relative;z-index:3;font-size:17px;color:#4a4a4a}
 .logo{width:190px;height:50px;margin-left:10px;flex:none;border:2px solid #8f8f8f;border-top:0;background:linear-gradient(165deg,#fff 45%,#d9d9d9);box-shadow:inset 0 0 0 1px #fff;color:#dc2a1e;display:flex;padding-left:7px}
 .logo svg{width:36px;height:44px;margin-top:1px}.logo .t{margin:17px 0 0 5px;font-style:italic;font-size:20px;line-height:26px;font-weight:400}.logo b{font-weight:800}
 nav{display:flex;align-items:center;margin-left:28px;width:474px;height:46px;gap:17px;flex:none}
 .pin{margin:10px 7px 0 27px}
 .tools{display:flex;align-items:center;height:45px;border-left:3px solid #aaa;width:486px;padding-left:11px;flex:none}
 .sel{display:flex;width:52px;height:38px;border:1.500px solid #909090;margin-left:2px}
 .sel div{width:38px;background:#cfcfcf;outline:1.500px solid #4a90b8;padding-left:2px;padding-top:2px}
 .title{width:202px;padding-left:47px;padding-top:12px;line-height:24px;flex:none}
 .search{display:flex;width:303px;height:35px;margin-top:6px;border:1.500px solid #c5c5c5;align-items:center;flex:none}
 .field{width:209px;height:31px;background:#ebedf1;margin-left:6px;padding:4px 0 0 3px;line-height:23px;color:#777}
 .win{display:flex;align-items:center;color:#777;padding-left:16px}.win b{font-family:Roboto,sans-serif;font-size:25px;width:14px}`,
 `<div class="logo"><svg viewBox="0 0 36 44" fill="none" stroke="#dc2a1e" stroke-linecap="round"><path d="M12 5C20 3 28 6 19 13L13 18" stroke-width="3"/><path d="M1 36C10 29 17 20 13 18 8 17 6 22 1 36C7 35 15 30 16 23" stroke-width="3"/><path d="M34 17C26 15 20 18 22 22 25 26 34 27 31 31 28 35 22 33 16 33" stroke-width="3.500"/></svg><div class="t"><sw-text w="131"><b>SOLID</b>WORKS</sw-text></div></div>
 <nav><sw-text w="51">檔案(F)</sw-text><sw-text w="52">編輯(E)</sw-text><sw-text w="54">檢視(V)</sw-text><sw-text w="48">插入(I)</sw-text><sw-text w="52">工具(T)</sw-text><sw-text w="59">視窗(W)</sw-text><sw-text w="55">說明(H)</sw-text></nav>
 <sw-icon class="pin" n="pin" s="24"></sw-icon>
 <div class="tools"><sw-icon n="new" s="32" style="margin-left:3px"></sw-icon><sw-caret w="20"></sw-caret><sw-icon n="open" s="32"></sw-icon><sw-caret w="14"></sw-caret><sw-icon n="save" s="32" style="margin-left:5px"></sw-icon><sw-caret w="14"></sw-caret><sw-icon n="print" s="32" style="margin-left:5px"></sw-icon><sw-caret w="14"></sw-caret><sw-icon n="undo" s="32" style="margin-left:5px"></sw-icon><sw-caret w="14" dim></sw-caret>
 <div class="sel"><div><sw-icon n="cursor" s="32"></sw-icon></div><sw-caret w="12"></sw-caret></div><sw-icon n="light" s="32" style="margin-left:4px"></sw-icon><sw-icon n="list" s="32" style="margin-left:5px"></sw-icon><sw-icon n="gear" s="32" style="margin-left:4px"></sw-icon><sw-caret w="18"></sw-caret></div>
 <div class="title"><sw-text w="70">2.SLDPRT</sw-text></div>
 <div class="search"><sw-icon n="cmd" s="32" style="margin-left:-3px"></sw-icon><div class="field"><sw-text w="67">搜尋指令</sw-text></div><sw-icon n="mag" s="32" style="margin-left:4px"></sw-icon><sw-caret w="20" dim></sw-caret></div>
 <div class="win"><b>?</b><sw-caret w="34"></sw-caret><sw-icon n="min" s="30" style="margin-left:-4px"></sw-icon><sw-icon n="restore" s="32" style="margin-left:6px"></sw-icon><sw-icon n="close" s="32" style="margin-left:6px"></sw-icon></div>`);

/* ribbon */
const big = (w, ic, lines, o = {}) => `<sw-command w="${w}" icon="${ic}" top="${o.top ?? 20}" ${o.menu ? 'menu' : ''} ${o.on ? 'on' : ''} ${o.tw ? `tw="${o.tw}"` : ''} lines="${lines}"></sw-command>`;
const stack = (w, items, ml = 0) => `<div class="stack" style="width:${w}px;margin-left:${ml}px">${items.map(([i, t, tw]) => `<div class="r"><sw-icon n="${i}" s="30"></sw-icon><sw-text w="${tw}">${t}</sw-text></div>`).join('')}</div>`;
element('sw-ribbon', `:host{display:flex;height:123px;flex:none;padding:6px 0 2px 8px;border-right:1px solid #858585;border-bottom:1.500px solid #858585;font-size:17px;color:#484848}
 .stack{display:flex;flex-direction:column;padding-left:4px;margin-top:-1px;flex:none}.r{display:flex;align-items:center;height:38px;gap:8px}.r sw-text{margin-top:-1px}.sep{width:1.500px;background:#c4c4c4;height:114px;flex:none}`,
 big(51,'boss','伸長|填料/|基材',{top:13}) + big(51,'revolve','旋轉|填料/|基材',{top:13}) + stack(194,[['sweep','掃出填料/基材',108],['loft','疊層拉伸填料/基材',142],['boundary','邊界填料/基材',108]]) + '<div class="sep"></div>' +
 big(48,'cut','伸長|除料',{top:13}) + big(56,'hole','異型孔|精靈',{top:6,menu:1}) + big(50,'revcut','旋轉|除料',{top:13}) + stack(152,[['sweepcut','掃出除料',66],['loftcut','疊層拉伸除料',101],['boundcut','邊界除料',66]],-3) + '<div class="sep"></div>' +
 big(46,'fillet','圓角',{top:6,menu:1}) + big(59,'pattern','直線複|製排列',{top:6,menu:1}) + stack(84,[['rib','肋材',33],['draft','拔模',33],['shell','薄殼',33]]) + stack(86,[['wrap','包覆',33],['intersect','相交',33],['mirror','鏡射',33]]) + '<div class="sep"></div>' +
 big(46,'refgeo','參考|幾何',{top:6,menu:1}) + big(42,'curve','曲線',{top:6,menu:1}) + '<div class="sep" style="margin-right:1px"></div>' + big(85,'instant','Instant3D',{top:13,on:1,tw:73}));
element('sw-command', `:host{display:flex;flex-direction:column;align-items:center;height:114px;flex:none;line-height:22.500px;position:relative}
 :host([on]){background:#d0d0d0;outline:1.500px solid #4a90b8;outline-offset:-1px}
 sw-icon{flex:none;margin-bottom:3px}.m{position:absolute;bottom:8px}`,
 (a, el) => { el.style.width = a('w') + 'px'; el.style.paddingTop = a('top') + 'px';
  return `<sw-icon n="${a('icon')}" s="30"></sw-icon>${a('lines').split('|').map(t => `<sw-text ${a('tw') ? `w="${a('tw')}"` : ''}>${t}</sw-text>`).join('')}${el.hasAttribute('menu') ? '<sw-caret class="m" w="12"></sw-caret>' : ''}`; });

/* tabs, tree and viewport */
element('sw-main', `:host{display:flex;flex-direction:column;height:753px;position:relative;
 background:radial-gradient(ellipse 560px 420px at 100% 0,rgba(250,250,253,.75) 0,rgba(250,250,253,.4) 40%,rgba(250,250,253,0) 100%),radial-gradient(ellipse 1330px 570px at 260px -60px,#fff 0,#fff 45%,rgba(255,255,255,0) 100%),linear-gradient(178deg,#e3e7f0 0,#dfe2ec 28%,#dbdee9 47%,#e2e5ee 56%,#f1f3f8 65%,#fdfdfe 77%,#fff 84%,#f7f9fc 100%)}
 .top{display:flex;height:33px}.tabs{display:flex;font-size:18.500px;width:656px;border-bottom:1.500px solid #858585;background:#d4d4d4;flex:none}
 .hud{display:flex;align-items:center;height:41px;padding-left:171px;color:#999;width:1194px}
 .rest{display:flex;flex:1;min-height:0}`,
 `<div class="top"><div class="tabs"><sw-tab w="56" on tw="37">特徵</sw-tab><sw-tab w="56" tw="36">草圖</sw-tab><sw-tab w="56" tw="36">評估</sw-tab><sw-tab w="95" tw="76">DimXpert</sw-tab><sw-tab w="216" tw="193">SOLIDWORKS 附加程式</sw-tab><sw-tab w="177" tw="156">SOLIDWORKS MBD</sw-tab></div>
 <div class="hud">${['zoomfit','zoomarea','zoomprev','section','dynview'].map(i=>`<sw-icon n="${i}" s="30" style="margin-right:8px"></sw-icon>`).join('')}<sw-icon n="orient" s="30" style="margin-left:1px"></sw-icon><sw-caret w="18" dim></sw-caret><sw-icon n="display" s="30" style="margin-left:3px"></sw-icon><sw-caret w="18" dim></sw-caret><sw-icon n="eye" s="30" style="margin-left:3px"></sw-icon><sw-caret w="18" dim></sw-caret><sw-icon n="appear" s="30" style="margin-left:4px"></sw-icon><sw-icon n="scene" s="30" style="margin-left:8px"></sw-icon><sw-caret w="20" dim></sw-caret><sw-icon n="monitor" s="30" style="margin-left:3px"></sw-icon><sw-caret w="20" dim></sw-caret>
 <sw-icon n="paneL" s="32" style="margin-left:345px"></sw-icon><sw-icon n="paneR" s="32" style="margin-left:6px"></sw-icon><sw-icon n="min" s="28" style="margin:2px 8px 0"></sw-icon><sw-icon n="restore" s="32" style="margin-right:6px"></sw-icon><sw-icon n="close" s="32"></sw-icon></div></div>
 <div class="rest"><sw-tree></sw-tree><sw-viewport></sw-viewport></div>`);
element('sw-tab', `:host{display:flex;align-items:center;justify-content:center;flex:none;height:33px;background:#d4d4d4;color:#1f1f1f;border-right:1.500px solid #858585;border-bottom:1.500px solid #858585}
 :host([on]){background:#f7f7f7;color:#555;border-bottom-color:#f7f7f7}`, (a, el) => { el.style.width = a('w') + 'px'; return `<sw-text w="${a('tw')}"><slot></slot></sw-text>`; });

element('sw-tree', `:host{display:flex;flex-direction:column;width:288px;background:#f7f7f7;border-right:1.500px solid #858585;position:relative;color:#000;font-size:17.500px;height:720px}
 .grip{height:16px;margin:2px 3px 0 0;border:1px solid #cfcfcf;border-width:1px 0;display:flex;justify-content:center;align-items:center}.dot{width:6px;height:6px;border-radius:50%;border:1.500px solid #999;background:#ddd}
 .pt{display:flex;margin-top:4px;height:40px}.pt div{width:52px;height:40px;display:flex;align-items:center;justify-content:center;background:#d4d4d4;border:1.500px solid #858585;border-left:0}.pt div.on{background:none;border-bottom:0}
 .line{height:1px;background:#aaa;margin:17px 3px 0 0}
 .filter{height:34px;margin:0 4px 0 3px;border:1.500px solid #bbb;padding:2px 0 0 4px}
 .nodes{height:320px;width:285px;overflow:hidden;display:flex;flex-direction:column}
 .root{display:flex;align-items:center;height:32px;padding-left:3px;gap:5px;flex:none;white-space:pre}.root sw-text{margin-top:-1px}
 .bar{height:3px;width:285px;background:#2f86cf;border-bottom:1px solid #1b1b9c}
 .sp{flex:1}.scroll{height:25px;width:285px;display:flex;background:#f0f0f0;border-top:1px solid #fff}.scroll i{width:25px;display:flex;align-items:center;justify-content:center}.thumb{width:234px;background:#cdcdcd}
 .handle{position:absolute;left:287px;top:324px;width:9px;height:39px;background:#f7f7f7;border:1px solid #858585;border-left:0;display:flex;align-items:center;justify-content:center}`,
 `<div class="grip"><span class="dot"></span></div>
 <div class="pt"><div class="on"><sw-icon n="asm" s="27"></sw-icon></div><div><sw-icon n="prop" s="30"></sw-icon></div><div><sw-icon n="config" s="30"></sw-icon></div><div><sw-icon n="target" s="28"></sw-icon></div><div><sw-icon n="ball" s="32"></sw-icon></div><svg width="14" height="22" viewBox="0 0 14 22" style="margin:6px 0 0 11px"><path d="M2 3 10 11 2 19" fill="none" stroke="#666" stroke-width="3.500"/></svg></div>
 <div class="line"></div><div class="filter"><sw-icon n="filter" s="28"></sw-icon></div>
 <div class="nodes"><div class="root"><sw-icon n="asm" s="27" style="margin-right:2px"></sw-icon><sw-text w="250">2  (預設&lt;&lt;預設&gt;_顯示狀態 1&gt;)</sw-text></div>
 <sw-node icon="history" open>歷程</sw-node><sw-node icon="sensor" tw="53">感測器</sw-node><sw-node icon="note" open>註記</sw-node><sw-node icon="material" tw="119">材質 &lt;未指定&gt;</sw-node><sw-node icon="plane" tw="71">前基準面</sw-node><sw-node icon="plane" tw="71">上基準面</sw-node><sw-node icon="plane" tw="71">右基準面</sw-node><sw-node icon="origin">原點</sw-node><sw-node icon="boss" open tw="88">填料-伸長1</sw-node></div>
 <div class="bar"></div><div class="sp"></div>
 <div class="scroll"><i><svg width="10" height="14" viewBox="0 0 10 14"><path d="M8 1 2 7 8 13" fill="none" stroke="#555" stroke-width="3"/></svg></i><div class="thumb"></div><i><svg width="10" height="14" viewBox="0 0 10 14" style="margin-left:4px"><path d="M2 1 8 7 2 13" fill="none" stroke="#555" stroke-width="3"/></svg></i></div>
 <div class="handle"><span class="dot" style="margin-right:1px"></span></div>`);
element('sw-node', `:host{display:flex;align-items:center;height:32px;flex:none}.a{width:38px;padding-left:13px;display:flex}.a svg{visibility:hidden}:host([open]) .a svg{visibility:visible}sw-text{margin:-2px 0 0 5px}`,
 a => `<span class="a"><svg width="7" height="12"><path d="M0 0 7 6 0 12z" fill="#555"/></svg></span><sw-icon n="${a('icon')}" s="29"></sw-icon><sw-text ${a('tw') ? `w="${a('tw')}"` : ''}><slot></slot></sw-text>`);

/* model canvas: the plate, the triad and the pointer sit at scene coordinates */
element('sw-viewport', `:host{display:block;position:relative;flex:1;height:720px}
 :host::after{content:"";position:absolute;left:0;right:0;bottom:0;height:3px;background:#c5c8e4;border-top:1.500px solid #5c5f90;box-sizing:border-box}
 svg.scene{position:absolute;left:0;top:0}
 .crumbs{position:absolute;left:14px;top:17px;width:306px;height:36px;display:flex;align-items:center;border:1px solid #cdcdcd;background:#fafafa;color:#000;font-size:16px}
 .blue{width:68px;height:36px;margin:0 -1px 0 auto;display:block}
 .sub{position:absolute;left:225px;top:58px;width:84px;height:36px;border:1px solid #cdcdcd;background:#fafafa;display:flex;align-items:center;color:#000;font-size:16px;padding-left:3px;gap:8px}
 .into{position:absolute;left:193px;top:60px}
 sw-icon.f{opacity:.72}.name{position:absolute;left:12px;top:698px;height:20px;overflow:hidden;color:#000;font:500 16px/22px "Noto Sans CJK TC",sans-serif}`,
 `<svg class="scene" width="1562" height="720" viewBox="288 202 1562 720"><path d="M1094.500 259.500 1276.500 682 857.500 831.500z" fill="#4296ea" stroke="#4296ea" stroke-width="57" stroke-linejoin="round"/><path d="M1094.500 259.500 1276.500 682 857.500 831.500z" fill="#003465" stroke="#003465" stroke-width="53.500" stroke-linejoin="round"/>
 <g fill="#fefefe" stroke="#4296ea" stroke-width="1.800"><circle cx="1094.500" cy="259.500" r="14"/><circle cx="1276.500" cy="682" r="14"/><circle cx="857.500" cy="831.500" r="14"/></g><path d="M1265 636.500h7M1268.500 633v7" stroke="#4d86c0"/>
 <path d="M348.500 845V808" stroke="#1f641f" stroke-width="6"/><path d="M348.500 845V808" stroke="#8fc98f" stroke-width="2"/><path d="M348.500 800 355 813H342z" fill="#1c6c1c" stroke="#174f17"/><path d="M348 845H382" stroke="#a41919" stroke-width="6"/><path d="M348 845H382" stroke="#f09a9a" stroke-width="2"/><path d="M393 845 380 838.500V851.500z" fill="#c81b1b" stroke="#761111"/><circle cx="348" cy="845" r="6.500" fill="#14147a" stroke="#0a0ae0"/><path d="M345 849 352 840" stroke="#00f"/>
 <text x="342.500" y="797" font-family="Liberation Serif" font-size="17.500" fill="#0a8a0a">Y</text><text x="393" y="850.500" font-family="Liberation Serif" font-size="17.500" fill="#f01010">X</text>
 <path d="M1379 838.500V860L1383.500 855.500 1387.500 864.500 1391 863 1387.500 854.500H1394z" fill="#fff" stroke="#222" stroke-width="1.200"/></svg>
 <div class="crumbs"><sw-icon class="f" n="asm" s="27" style="margin-left:20px"></sw-icon><svg width="18" height="36" style="margin-left:2px"><path d="M1 0 17 18 1 36" fill="none" stroke="#bbb" stroke-width="1.500"/></svg><sw-icon class="f" n="cube" s="32"></sw-icon><svg width="18" height="36"><path d="M1 0 17 18 1 36" fill="none" stroke="#bbb" stroke-width="1.500"/></svg><sw-icon class="f" n="boss" s="30" style="margin-right:8px"></sw-icon><sw-text w="77" style="margin-top:8px">填料-伸長1</sw-text><svg class="blue" viewBox="0 0 68 36">${DEFS}<path d="M.5 .5H67.500V35.500H.5L17 18z" fill="#c5dcee" stroke="#94b3d3"/><rect x="22" y="6" width="23.500" height="23.500" fill="url(#b3)" stroke="#628fa5"/></svg></div>
 <sw-icon class="into" n="into" s="30"></sw-icon><div class="sub"><sw-icon class="f" n="sketch" s="28"></sw-icon><sw-text w="38" style="margin-top:8px">草圖1</sw-text></div>
 <div class="name"><sw-text w="51">*前視</sw-text></div>`);

/* bottom model tabs */
element('sw-modeltabs', `:host{display:flex;height:26px;width:1850px;background:#f7f7f7;border-top:1.500px solid #858585;font-size:18.500px;color:#4a4a4a}
 .e{width:27px;border-left:2px solid #9cbfc3}.n{display:flex;width:97px;height:25px;background:#a5a7bb;border-top:1.500px solid #111;border-right:1px solid #858585}.n svg{width:24px;height:24px;border:1px solid #8789a2}
 .t{height:25px;display:flex;align-items:center;justify-content:center;border-right:1.500px solid #858585;border-bottom:1.500px solid #858585;background:#d4d4d4}.t.on{background:#f7f7f7;padding-left:6px}`,
 `<div class="e"></div><div class="n">${['M9 6V19M17 6 10 12.500 17 19z','M16 6 9 12.500 16 19z','M8 6 15 12.500 8 19z','M15 6V19M7 6 14 12.500 7 19z'].map(d=>`<svg viewBox="0 0 24 24"><path d="${d}" fill="#7b7d98" stroke="#7b7d98"/></svg>`).join('')}</div>
 <div class="t on" style="width:71px"><sw-text w="38">模型</sw-text></div><div class="t" style="width:90px;padding-right:2px"><sw-text w="67">3D 視圖</sw-text></div><div class="t" style="width:127px;padding-right:11px"><sw-text w="94">動作研究 1</sw-text></div>`);

/* right-hand sketch tools */
element('sw-sketchbar', `:host{display:flex;flex-direction:column;width:70px;height:777px;background:#f7f7f7;border-left:1.500px solid #9cbdc3;border-bottom:1.500px solid #777}
 .g{height:3px;margin:2px 0 7.500px 6px;background:repeating-linear-gradient(90deg,#999 0 2px,transparent 2px 4px)}
 .i{display:flex;align-items:center;height:38px;padding-left:10px}.i sw-caret{margin-left:15px}.s{height:1.500px;background:#858585;margin:2px 0 4.500px 8px}.m{padding-left:22px}`,
 `<div class="g"></div>${[['sketch',1],['dim',1],0,['line',1],['rect',1],['slot',1],['circle',1],['arc',1],['spline',1],['ellipse',1],['sfillet',2],['picture'],['hex'],['point'],['splane'],['text'],0,['trim',2],['convert',1],['offset'],['smirror']].map(x=>x?`<div class="i"><sw-icon n="${x[0]}" s="29"></sw-icon>${x[1]?`<sw-caret w="12" ${x[1]==2?'dim':''}></sw-caret>`:''}</div>`:'<div class="s"></div>').join('')}<div class="m"><sw-icon n="more" s="28" style="margin-top:-4px"></sw-icon></div>`);

element('sw-layerbar', `:host{display:flex;height:46px;flex:none;border-bottom:1.500px solid #777;align-items:center}
 .g{width:3px;height:40px;margin:4px 12px 0 4px;background:repeating-linear-gradient(#999 0 2px,transparent 2px 4px)}sw-icon{margin:1px 10px 0 0}.s{width:1.500px;height:44px;background:#858585;margin-left:1px}`,
 `<div class="g"></div>${['layeredit','layer','brush','widths','styles','swap','color'].map(i=>`<sw-icon n="${i}" s="29"></sw-icon>`).join('')}<div class="s"></div>`);
element('sw-status', `:host{display:flex;height:26px;flex:none;align-items:center;font-size:18px;color:#444;line-height:26px}
 i{width:1.500px;height:24px;background:#ccc;flex:none}sw-text{margin-top:2px}`,
 `<sw-text w="346" style="margin-left:1px">SOLIDWORKS Premium 2016 x64 Edition</sw-text><i style="margin-left:1197px"></i><i style="margin-left:6px"></i><sw-text w="130" style="margin-left:4px">正在編輯： 零件</sw-text><i style="margin-left:6px"></i><i style="margin-left:14px"></i><sw-text w="57" style="margin-left:25px">MMGS</sw-text><svg width="6" height="4" style="margin-left:12px"><path d="M3 0 6 4H0z" fill="#222"/></svg><sw-icon n="tag" s="26" style="margin:-6px 0 0 83px"></sw-icon>`);

/* Windows taskbar */
const app = (i, w, o = {}) => `<sw-task icon="${i}" w="${w}" ${o.bar ? `bar="${o.bar}"` : ''} ${o.multi ? 'multi' : ''} ${o.on ? 'on' : ''} s="${o.s || 35}"></sw-task>`;
element('sw-taskbar', `:host{display:flex;height:60px;flex:none;background:linear-gradient(90deg,#3fcde1 0,#3fcde1 520px,#32b3c7 600px,#38bcd0 700px,#38bcd0 1020px,#32b3c7 1160px,#33b5c8 1290px,#3fcde1 1400px);color:#fff;font-size:20.500px}
 .tray{display:flex;align-items:center;margin-left:auto;width:583px;height:60px}.clock{display:flex;flex-direction:column;align-items:center;font-size:17.500px;line-height:27px;width:86px;margin-left:14px}
 .nt{position:relative;margin-left:27px;width:60px;height:60px}.nt sw-icon{position:absolute;left:0;top:17px}.nt b{position:absolute;left:11px;top:29px;width:25px;height:25px;border-radius:50%;background:#35d8f3;border:1px solid #73e4f7;font-size:16px;line-height:23px;text-align:center}.edge{width:2px;height:60px;background:#85dfeb;margin-left:-8px}`,
 `${app('win',72,{s:30})}${app('tsearch',75,{s:30})}${app('chrome',75)}${app('explorer',75,{bar:62,multi:1})}${app('ppt',75)}${app('word',75)}${app('excel',75)}${app('paint',77)}${app('sw',73,{on:1,bar:73})}${app('chromeu',78,{bar:61,s:38})}${app('term',72,{bar:61,multi:1,s:33})}${app('sphere',76,{bar:61,multi:1,s:36})}${app('ring',74,{bar:61})}${app('dancer',75,{bar:61,s:36})}
 <div class="tray"><sw-icon n="weather" s="32" style="margin-left:14px"></sw-icon><sw-text w="46" style="margin-left:14px">23°C</sw-text><sw-text w="83" style="margin-left:13px">多雲時晴</sw-text><sw-icon n="up" s="25" style="margin-left:23px"></sw-icon><sw-icon n="net" s="29" style="margin-left:9px"></sw-icon><sw-icon n="batt" s="28" style="margin-left:7px"></sw-icon><sw-icon n="vol" s="28" style="margin-left:8px"></sw-icon><sw-text w="22" style="margin-left:10px;font-weight:500">英</sw-text>
 <div class="clock"><sw-text w="82">下午 12:51</sw-text><sw-text w="75">2022/1/3</sw-text></div><div class="nt"><sw-icon n="notif" s="28"></sw-icon><b>2</b></div><div class="edge"></div></div>`);
element('sw-task', `:host{display:flex;align-items:center;justify-content:center;position:relative;height:60px;flex:none}
 :host([on]){background:#3dd3e9;border-right:7px solid #2a9fb0;box-shadow:inset -1px 0 #1b7986}
 .b{position:absolute;bottom:0;height:3px;left:50%;transform:translateX(-50%);background:#a5effa;display:flex;justify-content:flex-end}.b i{width:14px;background:#7eb9c2;border-left:2px solid #4f929c}`,
 (a, el) => { el.style.width = a('w') + 'px'; return `<sw-icon n="${a('icon')}" s="${a('s')}"></sw-icon>${a('bar') ? `<div class="b" style="width:${a('bar')}px">${el.hasAttribute('multi') ? '<i></i>' : ''}</div>` : ''}`; });

/* primitives */
element('sw-caret', `:host{display:inline-flex;justify-content:center;align-items:center;flex:none;color:#3a3a3a}:host([dim]){color:#999}`,
 (a, el) => { el.style.width = a('w') + 'px'; return '<svg width="7" height="5"><path d="M0 0H7L3.500 5z" fill="currentColor"/></svg>'; });
element('sw-icon', `:host{display:block;flex:none}svg{display:block;overflow:visible}`,
 a => `<svg width="${a('s')}" height="${a('s')}" viewBox="0 0 32 32">${DEFS}${ICONS[a('n')]}</svg>`);
element('sw-text', `:host{display:inline-block;white-space:pre;flex:none}span{display:inline-block;transform:translateY(-1px);transform-origin:0 50%}`, '<span><slot></slot></span>',
 (el, root) => { const w = +el.getAttribute('w'); if (!w) return; const s = root.querySelector('span'), n = s.getBoundingClientRect().width; if (!n) return; el.style.width = w + 'px'; s.style.transform = `translateY(-1px) scaleX(${w / n})`; });

for (const [name, cls] of pending) customElements.define(name, cls);
</script>
</body>
</html>
